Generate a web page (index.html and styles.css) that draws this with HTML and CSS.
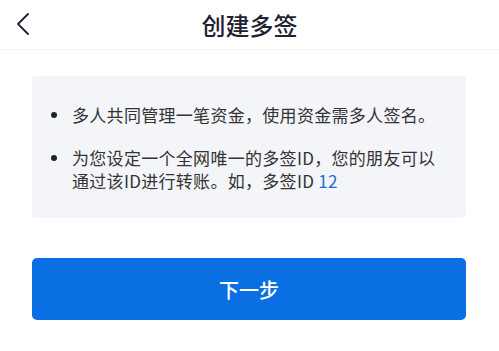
FILE: index.html
```html
<!DOCTYPE html>
<html lang="zh-CN">

<head>
  <meta charset="utf-8">
  <link rel="stylesheet" href="styles.css">
</head>

<body>
  <div class="header">
    <div class="back">
      <svg width="14" height="22" viewBox="0 0 14 22">
        <path d="M12 1 L2 11 L12 21" fill="none" stroke="#1f2233" stroke-width="1.8" stroke-linecap="round" stroke-linejoin="round"/>
      </svg>
    </div>
    <div class="title">创建多签</div>
    <div></div>
  </div>

  <div class="card">
    <ul class="tips">
      <li><span>多人共同管理一笔资金，使用资金需多人签名。</span></li>
      <li><span>为您设定一个全网唯一的多签ID，您的朋友可以通过该ID进行转账。如，多签ID<em class="num">12</em></span></li>
    </ul>
  </div>

  <div class="btn">下一步</div>
</body>
</html>
```

FILE: styles.css
```css
body {
  margin: 0;
  background: #fff;
  font-family: "Noto Sans CJK SC", "Noto Sans", sans-serif;
}
.header {
  height: 49px;
  border-bottom: 1px solid #eeeff2;
  display: grid;
  grid-template-columns: 1fr auto 1fr;
  align-items: center;
}
.back {
  padding-left: 16px;
  display: flex;
  align-items: center;
  height: 100%;
  margin-top: -1px;
}
.title {
  font-size: 24px;
  font-weight: 500;
  color: #1f2233;
  line-height: 40px;
}
.card {
  margin: 26px 33px 0 32px;
  background: #f4f5f8;
  border-radius: 4px;
  padding: 27px 26px 26px 19px;
}
.tips {
  margin: 0;
  padding: 0;
  list-style: none;
  display: flex;
  flex-direction: column;
  gap: 20px;
}
.tips li {
  display: flex;
  align-items: flex-start;
  font-size: 17px;
  line-height: 23px;
  letter-spacing: 0.3px;
  color: #333;
}
.tips li::before {
  content: "";
  flex: none;
  width: 6px;
  height: 6px;
  border-radius: 50%;
  background: #1f2233;
  margin: 9px 15px 0 0;
}
.num {
  font-style: normal;
  color: #1b6fd8;
  margin-left: 4px;
}
.btn {
  margin: 40px 33px 0 32px;
  height: 62px;
  border-radius: 5px;
  background: #0a6fe2;
  color: #fff;
  font-size: 20px;
  font-weight: 500;
  display: flex;
  align-items: center;
  justify-content: center;
}
```
